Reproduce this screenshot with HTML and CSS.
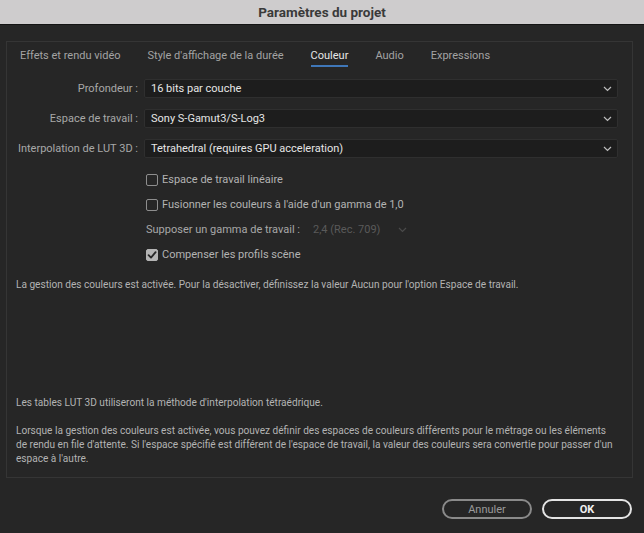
FILE: index.html
```html
<!DOCTYPE html>
<html lang="fr">
<head>
<meta charset="utf-8">
<title>Paramètres du projet</title>
<link rel="stylesheet" href="styles.css">
</head>
<body>
<div class="window">
  <div class="titlebar">Paramètres du projet</div>
  <div class="panel">
    <div class="tabs">
      <span class="tab">Effets et rendu vidéo</span>
      <span class="tab">Style d'affichage de la durée</span>
      <span class="tab active">Couleur</span>
      <span class="tab">Audio</span>
      <span class="tab">Expressions</span>
    </div>
    <div class="form">
      <label class="label">Profondeur :</label>
      <div class="select"><span>16 bits par couche</span><svg class="chev" width="9" height="6" viewBox="0 0 9 6"><polyline points="1,1 4.5,4.5 8,1" fill="none" stroke="#bdbdbd" stroke-width="1.2"/></svg></div>
      <label class="label">Espace de travail :</label>
      <div class="select"><span>Sony S-Gamut3/S-Log3</span><svg class="chev" width="9" height="6" viewBox="0 0 9 6"><polyline points="1,1 4.5,4.5 8,1" fill="none" stroke="#bdbdbd" stroke-width="1.2"/></svg></div>
      <label class="label">Interpolation de LUT 3D :</label>
      <div class="select"><span>Tetrahedral (requires GPU acceleration)</span><svg class="chev" width="9" height="6" viewBox="0 0 9 6"><polyline points="1,1 4.5,4.5 8,1" fill="none" stroke="#bdbdbd" stroke-width="1.2"/></svg></div>
    </div>
    <div class="checks">
      <div class="row"><span class="box"></span><span>Espace de travail linéaire</span></div>
      <div class="row"><span class="box"></span><span>Fusionner les couleurs à l'aide d'un gamma de 1,0</span></div>
      <div class="row gamma"><span class="glabel">Supposer un gamma de travail :</span><span class="gvalue">2,4 (Rec. 709)</span><svg class="gchev" width="9" height="6" viewBox="0 0 9 6"><polyline points="1,1 4.5,4.5 8,1" fill="none" stroke="#4a4a4a" stroke-width="1.2"/></svg></div>
      <div class="row"><span class="box checked"><svg width="12" height="12" viewBox="0 0 12 12"><polyline points="2.6,6.2 5,8.6 9.6,3.2" fill="none" stroke="#262626" stroke-width="1.8" stroke-linecap="round" stroke-linejoin="round"/></svg></span><span>Compenser les profils scène</span></div>
    </div>
    <p class="info first">La gestion des couleurs est activée. Pour la désactiver, définissez la valeur Aucun pour l'option Espace de travail.</p>
    <p class="info lut">Les tables LUT 3D utiliseront la méthode d'interpolation tétraédrique.</p>
    <p class="info last">Lorsque la gestion des couleurs est activée, vous pouvez définir des espaces de couleurs différents pour le métrage ou les éléments<br>de rendu en file d'attente. Si l'espace spécifié est différent de l'espace de travail, la valeur des couleurs sera convertie pour passer d'un<br>espace à l'autre.</p>
  </div>
  <div class="buttons">
    <button class="btn cancel">Annuler</button>
    <button class="btn ok">OK</button>
  </div>
</div>
</body>
</html>
```
FILE: styles.css
```css
html, body {
  margin: 0;
  padding: 0;
  background: #262626;
}
.window {
  width: 644px;
  height: 533px;
  overflow: hidden;
  background: #262626;
  font-family: "Roboto", "Liberation Sans", sans-serif;
  font-size: 11px;
  color: #b0b0b0;
}
.titlebar {
  height: 24px;
  line-height: 24px;
  background: #cecccd;
  border-bottom: 1px solid #141414;
  text-align: center;
  font-family: "Roboto", "Liberation Sans", sans-serif;
  font-weight: bold;
  font-size: 13.5px;
  color: #3a3a3a;
}
.panel {
  margin: 16px 11px 0 6px;
  height: 435px;
  border: 1px solid #353535;
  padding: 0 14px 0 9px;
}
.tabs {
  display: flex;
  gap: 27px;
  padding-left: 4px;
  padding-top: 7px;
}
.tab {
  line-height: 14px;
  padding-bottom: 2px;
  border-bottom: 2px solid transparent;
  color: #a3a3a3;
  white-space: nowrap;
}
.tab.active {
  color: #e6e6e6;
  border-bottom-color: #3f77b8;
}
.form {
  display: grid;
  grid-template-columns: 122px 1fr;
  column-gap: 6px;
  row-gap: 11px;
  margin-top: 12px;
  align-items: center;
}
.label {
  text-align: right;
  color: #a8a8a8;
  white-space: nowrap;
}
.select {
  height: 17px;
  border: 1px solid #2f2f2f;
  border-radius: 2px;
  background: #1d1d1d;
  display: flex;
  align-items: center;
  justify-content: space-between;
  padding: 0 5px 0 6px;
  color: #e6e6e6;
}
.chev { display: block; }
.checks {
  margin-top: 9px;
  padding-left: 130px;
}
.row {
  height: 25px;
  display: flex;
  align-items: center;
  gap: 4px;
  color: #b3b3b3;
}
.box {
  width: 10px;
  height: 10px;
  border: 1.5px solid #8e8e8e;
  border-radius: 2px;
  box-sizing: content-box;
  display: flex;
  align-items: center;
  justify-content: center;
}
.box.checked {
  background: #b4b4b4;
  border-color: #b4b4b4;
}
.box svg { display: block; margin: -1.5px; }
.gamma { gap: 0; }
.glabel { width: 167px; color: #a8a8a8; }
.gvalue { width: 85px; color: #5a5a5a; }
.gchev { display: block; }
.info {
  margin: 0 -10px 0 0;
  font-size: 10.1px;
  line-height: 14px;
  color: #b3b3b3;
  white-space: nowrap;
}
.info.first { margin-top: 11px; }
.info.lut { margin-top: 104px; }
.info.last { margin-top: 14px; }
.buttons {
  display: flex;
  justify-content: flex-end;
  gap: 10px;
  margin: 21px 12px 0 0;
}
.btn {
  width: 90px;
  height: 20px;
  border-radius: 10px;
  background: transparent;
  font-family: inherit;
  font-size: 11px;
  padding: 0;
}
.btn.cancel {
  border: 2px solid #8a8a8a;
  color: #9a9a9a;
}
.btn.ok {
  border: 2px solid #e4e4e4;
  color: #f0f0f0;
  font-weight: bold;
}
```
